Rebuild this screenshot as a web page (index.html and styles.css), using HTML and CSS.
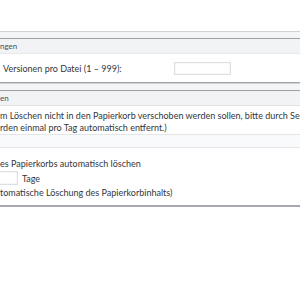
FILE: index.html
```html
<!DOCTYPE html>
<html lang="de">
<head>
<meta charset="utf-8">
<link rel="stylesheet" href="styles.css">
</head>
<body>
<div class="page">
  <section class="panel first">
    <div class="panel-head">ngen</div>
    <div class="row">
      <span class="label">Versionen pro Datei (1 – 999):</span>
      <input class="field" type="text">
    </div>
  </section>
  <section class="panel">
    <div class="panel-head">en</div>
    <div class="hint">
      <p>m Löschen nicht in den Papierkorb verschoben werden sollen, bitte durch Semikolon trennen.</p>
      <p>rden einmal pro Tag automatisch entfernt.)</p>
    </div>
    <div class="spacer"></div>
    <div class="block">
      <p class="line">es Papierkorbs automatisch löschen</p>
      <div class="days"><input class="field small" type="text"><span>Tage</span></div>
      <p class="line">tomatische Löschung des Papierkorbinhalts)</p>
    </div>
  </section>
</div>
</body>
</html>
```

FILE: styles.css
```css
html, body {
  margin: 0;
  padding: 0;
  background: #ffffff;
  overflow: hidden;
}
body {
  font-family: Lato, "Noto Sans", sans-serif;
  font-size: 9px;
  color: #33363b;
  width: 300px;
  height: 300px;
}
.page {
  padding-top: 31px;
}
.panel {
  border-top: 1px solid #cfd3d8;
  background: #f4f5f7;
  padding-top: 6px;
}
.panel-head {
  border-top: 1px solid #9ba1a8;
  background: #f2f3f5;
  height: 14px;
  line-height: 14px;
  font-size: 8px;
  color: #4c5056;
}
.row {
  background: #fff;
  height: 28px;
  display: flex;
  align-items: center;
  border-top: 1px solid #e6e8eb;
  border-bottom: 1px solid #a0a5ab;
}
.label {
  padding-left: 3px;
  width: 171px;
}
.field {
  width: 57px;
  height: 13px;
  border: 1px solid #dcdfe3;
  box-shadow: inset 0 0 2px #e6e8eb;
  padding: 0;
  margin: 0;
  background: #fff;
  box-sizing: border-box;
}
.hint {
  background: #fff;
  border-top: 1px solid #dfe2e6;
  border-bottom: 1px solid #e3e5e8;
  padding: 4px 0 0 0;
  white-space: nowrap;
}
.hint p {
  margin: 0;
  line-height: 12px;
}
.spacer {
  height: 12px;
  border-bottom: 1px solid #e3e5e8;
  background: #f9fafb;
}
.block {
  background: #fff;
  padding: 9px 0 6px 0;
  border-bottom: 2px solid #a6aab0;
}
.line {
  margin: 0;
  line-height: 13px;
  white-space: nowrap;
}
.days {
  display: flex;
  align-items: center;
  gap: 4px;
  margin-left: -40px;
  height: 16px;
}
.field.small {
  width: 58px;
  height: 14px;
}
```
